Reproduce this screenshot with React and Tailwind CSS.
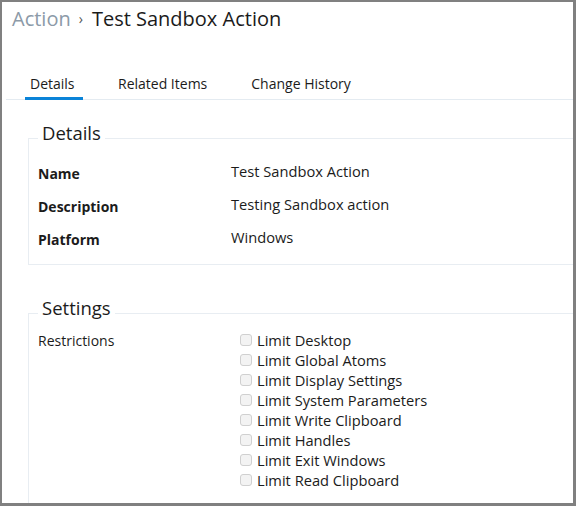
import React from 'react'

const restrictions = [
  'Limit Desktop',
  'Limit Global Atoms',
  'Limit Display Settings',
  'Limit System Parameters',
  'Limit Write Clipboard',
  'Limit Handles',
  'Limit Exit Windows',
  'Limit Read Clipboard',
]

const details = [
  ['Name', 'Test Sandbox Action'],
  ['Description', 'Testing Sandbox action'],
  ['Platform', 'Windows'],
]

export default function App() {
  return (
    <div className="w-[576px] h-[506px] overflow-hidden bg-white border-[#808080] border-l-2 border-t-2 border-r-[3px] border-b-[3px] font-['Open_Sans',sans-serif] text-[#1b1b1b]">
      {/* breadcrumb */}
      <div className="h-[34px] pl-[10px] flex items-center text-[20px] leading-none">
        <span className="text-[#8c9aa8]">Action</span>
        <span className="ml-[8px] mr-[9px] text-[14px] text-[#555]">›</span>
        <span>Test Sandbox Action</span>
      </div>

      {/* tabs */}
      <div className="mt-[36px] ml-[4px] flex border-b border-[#e4ebf1] text-[14px] h-[28px] pt-px">
        <div className="ml-[19px] w-[58px] pl-[5px] border-b-[3px] border-[#0a83d8] h-[27px] -mb-px">Details</div>
        <div className="ml-[35px]">Related Items</div>
        <div className="ml-[44px]">Change History</div>
      </div>

      {/* details */}
      <fieldset className="mt-[26px] ml-[26px] -mr-[20px] border border-[#e8edf2] pl-[9px] pb-[17px]">
        <legend className="relative -top-[5px] px-[4px] text-[18.5px] leading-[24px]">Details</legend>
        <div className="mt-[9px] flex flex-col gap-[11px]">
          {details.map(([k, v]) => (
            <div key={k} className="flex h-[22px]">
              <span className="w-[193px] font-bold pt-[4px] text-[14px]">{k}</span>
              <span className="text-[14.67px] pt-px">{v}</span>
            </div>
          ))}
        </div>
      </fieldset>

      {/* settings */}
      <fieldset className="mt-[36px] ml-[26px] -mr-[20px] border border-[#e8edf2] pl-[9px] pb-[30px]">
        <legend className="relative -top-[5px] px-[4px] text-[18.5px] leading-[24px]">Settings</legend>
        <div className="mt-[5px] flex text-[14.67px]">
          <span className="w-[202px] text-[14px]">Restrictions</span>
          <div className="flex flex-col">
            {restrictions.map((r) => (
              <label key={r} className="flex items-center h-[20px]">
                <span className="w-[12px] h-[12px] rounded-[3px] border border-[#d0d0d0] bg-[#f3f3f3] mr-[5px]" />
                <span>{r}</span>
              </label>
            ))}
          </div>
        </div>
      </fieldset>
    </div>
  )
}
